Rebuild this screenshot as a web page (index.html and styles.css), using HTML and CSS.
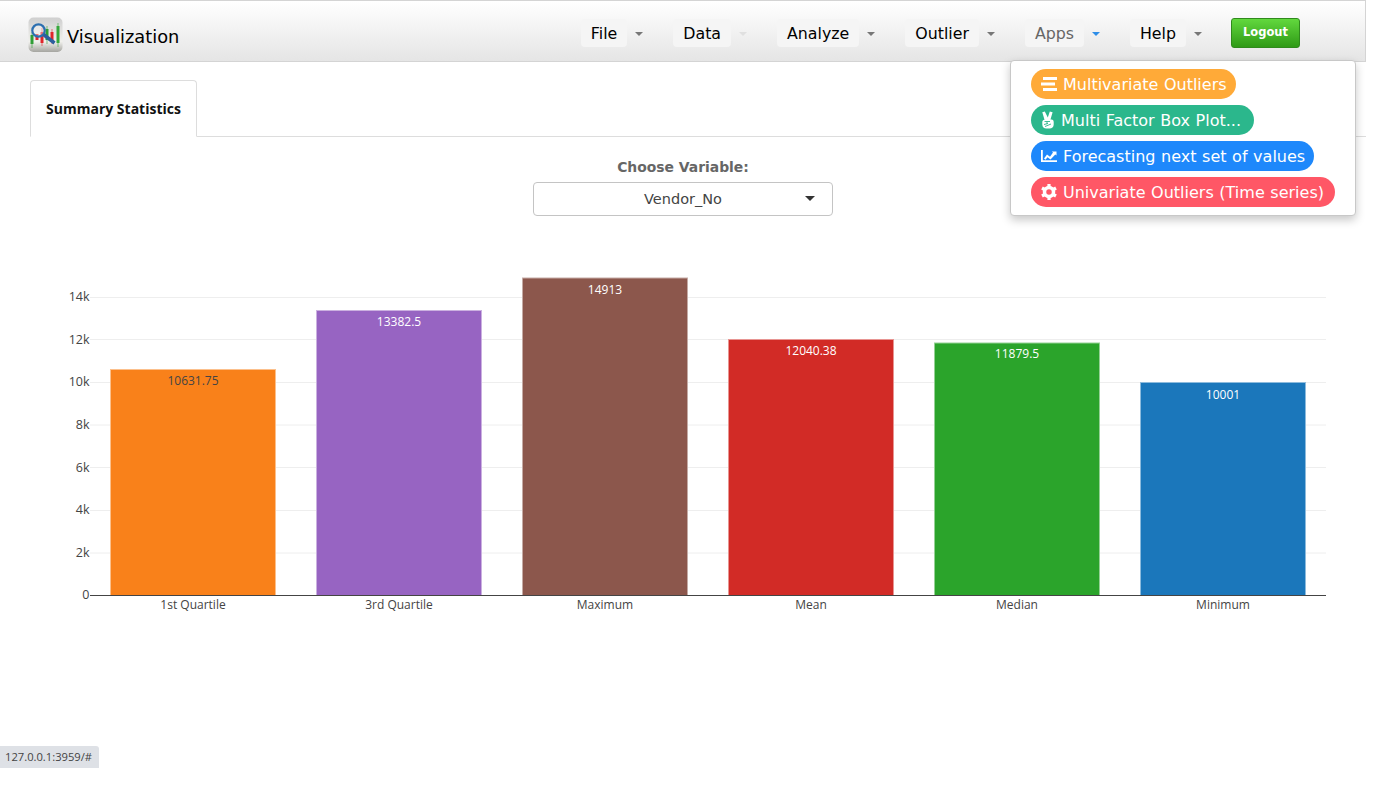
FILE: index.html
```html
<!DOCTYPE html>
<html>
<head>
   <meta charset="utf-8" />
   <title>Visualization</title>
   <link rel="stylesheet" href="styles.css">
</head>
<body>
   <div class="page">
       <header class="topbar">
           <div class="brand">
               <svg class="logo" width="36" height="36" viewBox="0 0 36 36">
                   <defs>
                       <linearGradient id="logo-bg" x1="0" y1="0" x2="0" y2="1">
                           <stop offset="0" stop-color="#cfcfcf" />
                           <stop offset="0.7" stop-color="#f0f0ec" />
                           <stop offset="1" stop-color="#a5a5a0" />
                       </linearGradient>
                   </defs>
                   <rect x="0.5" y="0.5" width="34" height="34.5" rx="5" fill="url(#logo-bg)" />
                   <path d="M2.500 27v-9h3v9zM3.700 18v-3h.6v16h-.6z" fill="#2f9e36" />
                   <path d="M17.500 23V12h3v11zM18.700 12V9h.6v18h-.6z" fill="#2f9e36" />
                   <path d="M28.500 26V9h3v17zM29.700 6h.6v24h-.6z" fill="#35a83a" />
                   <path d="M7.500 23v-6h3v6zM12.500 26V15h3v11zM22.500 24V15h3v9zM23.700 15v-3h.6v15h-.6zM13.700 15v-4h.6v18h-.6z" fill="#e0262b" />
                   <circle cx="10.500" cy="13.500" r="6.200" fill="#ffffff" fill-opacity="0.35" stroke="#2c6fb0" stroke-width="2.200" />
                   <path d="M15.500 17.500L26.500 26" stroke="#2c5f9e" stroke-width="3.500" fill="none" />
               </svg>
               <span class="brand-name">Visualization</span>
           </div>
           <nav class="menu">
               <div class="menu-item"><a class="pill">File</a><span class="caret"></span></div>
               <div class="menu-item"><a class="pill">Data</a><span class="caret caret-faint"></span></div>
               <div class="menu-item"><a class="pill">Analyze</a><span class="caret"></span></div>
               <div class="menu-item"><a class="pill">Outlier</a><span class="caret"></span></div>
               <div class="menu-item"><a class="pill pill-open">Apps</a><span class="caret caret-open"></span></div>
               <div class="menu-item"><a class="pill">Help</a><span class="caret"></span></div>
               <a class="logout">Logout</a>
           </nav>
           <div class="dropdown">
               <a class="app-link app-orange">
                   <svg width="16" height="14" viewBox="0 0 16 14" fill="#fff"><path d="M2 0h14v3H2zM0 5.500h14v3H0zM2 11h14v3H2z" /></svg>
                   Multivariate Outliers
               </a>
               <a class="app-link app-green">
                   <svg width="14" height="18" viewBox="0 0 14 18"><path d="M1.300 1.300L3.800 .4 6.800 6.500 8.800 .4l2.800.8L9.500 8.500h1c1.500 0 2.200 1 2.200 2.500v2.500c0 2.500-1.800 4-4 4H5.300c-2.300 0-4-1.500-4-4V11c0-1.200.8-2 2.200-2.300z" fill="#fff" /><path d="M3.500 10.500h5.500M6 10.500v2.500M3 13.500l4-1M4 15.500l6-2.500" stroke="#2bb78c" stroke-width="0.9" fill="none" /></svg>
                   Multi Factor Box Plot...
               </a>
               <a class="app-link app-blue">
                   <svg width="16" height="12" viewBox="0 0 16 12" fill="#fff"><path d="M0 0h1.800v10.200H16V12H0z" /><path d="M3 8.500L6 4.500l3 2.300 3-4.300-1.200-1H15.500v4l-1.200-1.100L9.500 9.500l-3-2.300-2 2.500z" /></svg>
                   Forecasting next set of values
               </a>
               <a class="app-link app-red">
                   <svg width="16" height="16" viewBox="0 0 16 16"><circle cx="8" cy="8" r="4.500" fill="none" stroke="#fff" stroke-width="3.500" /><path d="M8 0v3M8 13v3M1 4l2.600 1.500M12.400 10.500L15 12M1 12l2.600-1.500M12.400 5.500L15 4" stroke="#fff" stroke-width="3.200" /></svg>
                   Univariate Outliers (Time series)
               </a>
           </div>
       </header>

       <main class="content">
           <div class="tabs">
               <a class="tab">Summary Statistics</a>
           </div>
           <div class="variable-picker">
               <label class="picker-label">Choose Variable:</label>
               <div class="picker-box">
                   <span>Vendor_No</span>
                   <span class="picker-caret"></span>
               </div>
           </div>
           <svg class="chart" width="1365" height="400" viewBox="0 230 1365 400">
               <g class="grid">
                   <path d="M90 553h1236M90 510.500h1236M90 467.500h1236M90 425h1236M90 382.500h1236M90 339.500h1236M90 297.500h1236" />
               </g>
               <g class="y-ticks">
                   <text x="89.500" y="599">0</text>
                   <text x="89.500" y="557">2k</text>
                   <text x="89.500" y="514">4k</text>
                   <text x="89.500" y="472">6k</text>
                   <text x="89.500" y="429">8k</text>
                   <text x="89.500" y="386">10k</text>
                   <text x="89.500" y="344">12k</text>
                   <text x="89.500" y="301">14k</text>
               </g>
               <g class="bars">
                   <rect x="110.500" y="369.500" width="165" height="226" fill="#f9811a" stroke="#fcc08c" />
                   <rect x="316.500" y="310.500" width="165" height="285" fill="#9764c2" stroke="#cbb1e0" />
                   <rect x="522.500" y="278" width="165" height="317.500" fill="#8c574c" stroke="#c5aba5" />
                   <rect x="728.500" y="339.500" width="165" height="256" fill="#d22b26" stroke="#e89592" />
                   <rect x="934.500" y="343" width="165" height="252.500" fill="#2ba42b" stroke="#95d195" />
                   <rect x="1140.500" y="382.500" width="165" height="213" fill="#1b77bb" stroke="#8dbbdd" />
               </g>
               <path class="axis" d="M90 595.500h1236" />
               <g class="bar-values">
                   <text class="value-dark" x="193" y="385">10631.75</text>
                   <text x="399" y="326">13382.5</text>
                   <text x="605" y="294">14913</text>
                   <text x="811" y="355">12040.38</text>
                   <text x="1017" y="358">11879.5</text>
                   <text x="1223" y="399">10001</text>
               </g>
               <g class="x-ticks">
                   <text x="193" y="609">1st Quartile</text>
                   <text x="399" y="609">3rd Quartile</text>
                   <text x="605" y="609">Maximum</text>
                   <text x="811" y="609">Mean</text>
                   <text x="1017" y="609">Median</text>
                   <text x="1223" y="609">Minimum</text>
               </g>
           </svg>
       </main>
       <div class="status-link">127.0.0.1:3959/#</div>
   </div>
</body>
</html>
```

FILE: styles.css
```css
html, body {
    margin: 0;
    height: 100%;
    background-color: #fff;
    overflow: hidden;
}
.page {
    width: 1366px;
    height: 788px;
    position: relative;
}

/* top bar */
.topbar {
    box-sizing: border-box;
    height: 62px;
    display: flex;
    align-items: flex-start;
    position: relative;
    padding-left: 28px;
    border: 1px solid #d4d4d4;
    border-left: 0;
    background: linear-gradient(to bottom, #ffffff, #e5e5e5);
}
.brand {
    display: flex;
    align-items: center;
    padding-top: 16px;
}
.logo {
    display: block;
}
.brand-name {
    margin-left: 3px;
    padding-top: 2px;
    font-family: "DejaVu Sans", sans-serif;
    font-size: 17.800px;
    color: #000;
}
.menu {
    display: flex;
    align-items: flex-start;
    margin-left: auto;
    margin-right: 65px;
    padding-top: 18px;
}
.menu-item {
    display: flex;
    align-items: center;
    margin-right: 30px;
}
.pill {
    display: block;
    height: 28px;
    line-height: 29px;
    padding: 0 10px;
    border-radius: 4px;
    background-color: #f5f5f5;
    font-family: "DejaVu Sans", sans-serif;
    font-size: 15.800px;
    color: #000;
}
.pill-open {
    color: #666;
}
.caret {
    width: 0;
    height: 0;
    margin: 2px 0 0 8px;
    border-top: 4px solid #777;
    border-left: 4px solid transparent;
    border-right: 4px solid transparent;
}
.caret-faint {
    border-top-color: #e0e0e0;
}
.caret-open {
    border-top-color: #2e8ee8;
}
.logout {
    box-sizing: border-box;
    width: 69px;
    height: 30px;
    margin: -1px 0 0 -1px;
    line-height: 27px;
    text-align: center;
    border: 1px solid #2f8a1c;
    border-radius: 3px;
    background: linear-gradient(to bottom, #62d83e, #2f9a16);
    font-family: "DejaVu Sans", sans-serif;
    font-size: 11.500px;
    font-weight: bold;
    color: #fff;
}

/* apps dropdown */
.dropdown {
    box-sizing: border-box;
    position: absolute;
    top: 59px;
    left: 1010px;
    z-index: 5;
    width: 346px;
    height: 156px;
    padding: 8px 20px;
    display: flex;
    flex-direction: column;
    align-items: flex-start;
    gap: 6px;
    background-color: #fff;
    border: 1px solid #c8c8c8;
    border-radius: 4px;
    box-shadow: 0 4px 10px rgba(0, 0, 0, 0.22);
}
.app-link {
    display: flex;
    align-items: center;
    gap: 6px;
    height: 30px;
    padding: 0 10px;
    border-radius: 15px;
    font-family: "DejaVu Sans", sans-serif;
    font-size: 16px;
    word-spacing: 0.5px;
    color: #fff;
    white-space: nowrap;
}
.app-orange { background-color: #ffaa38; padding-right: 9px; }
.app-green { background-color: #2bb78c; padding-right: 13px; }
.app-blue { background-color: #1e88fb; padding-right: 9px; }
.app-red { background-color: #ff5766; padding-right: 11px; }

/* tab strip */
.content {
    padding-top: 18px;
}
.tabs {
    height: 57px;
    box-sizing: border-box;
    margin-left: 30px;
    border-bottom: 1px solid #ddd;
}
.tab {
    box-sizing: border-box;
    display: block;
    width: 167px;
    height: 57px;
    line-height: 55px;
    text-align: center;
    border: 1px solid #ddd;
    border-bottom-color: #fff;
    border-radius: 4px 4px 0 0;
    background-color: #fff;
    font-family: "Open Sans", sans-serif;
    font-size: 14px;
    font-weight: bold;
    color: #111;
}

/* variable select */
.variable-picker {
    width: 300px;
    margin: 20px 0 0 533px;
}
.picker-label {
    display: block;
    height: 25px;
    line-height: 20px;
    text-align: center;
    font-family: "DejaVu Sans", sans-serif;
    font-size: 13.900px;
    font-weight: bold;
    color: #666;
}
.picker-box {
    box-sizing: border-box;
    height: 34px;
    display: flex;
    align-items: center;
    justify-content: center;
    position: relative;
    border: 1px solid #c4c4c4;
    border-radius: 4px;
    font-family: "DejaVu Sans", sans-serif;
    font-size: 14.500px;
    color: #444;
}
.picker-caret {
    position: absolute;
    right: 17px;
    top: 13px;
    width: 0;
    height: 0;
    border-top: 5px solid #333;
    border-left: 5px solid transparent;
    border-right: 5px solid transparent;
}

/* chart */
.chart {
    display: block;
    margin-top: 14px;
}
.grid path {
    stroke: #eeeeee;
    fill: none;
}
.axis {
    stroke: #444;
    fill: none;
}
.chart text {
    font-family: "Open Sans", sans-serif;
    font-size: 12px;
    fill: #444;
}
.y-ticks text {
    font-size: 12.500px;
    text-anchor: end;
}
.x-ticks text {
    font-size: 12px;
    text-anchor: middle;
}
.bar-values text {
    text-anchor: middle;
    fill: #fff;
}
.bar-values .value-dark {
    fill: #444;
}

/* hover url */
.status-link {
    position: absolute;
    left: 0;
    top: 746px;
    height: 22px;
    line-height: 22px;
    padding: 0 7px 0 5px;
    border-radius: 0 3px 0 0;
    background-color: #dee1e6;
    font-family: "Open Sans", sans-serif;
    font-size: 11.200px;
    color: #444;
}
```
